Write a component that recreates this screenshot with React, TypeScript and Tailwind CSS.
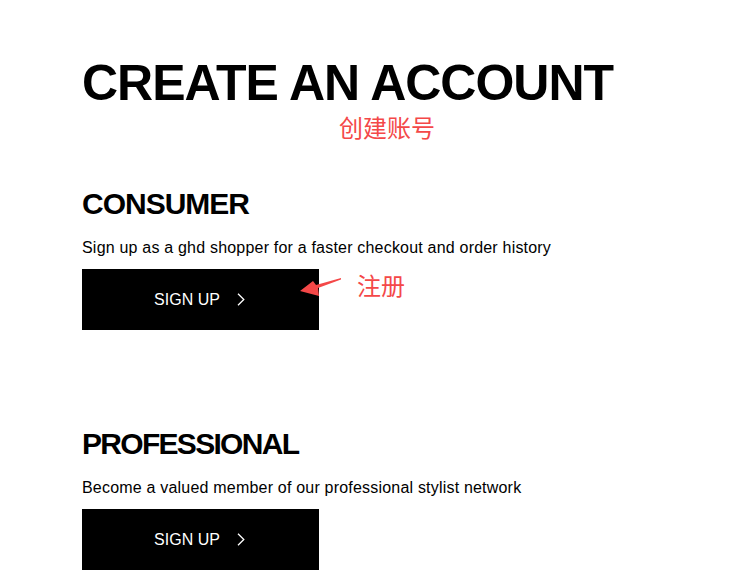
import React from "react";

const Chevron = () => (
  <svg width="8" height="13" viewBox="0 0 8 13" fill="none" className="shrink-0">
    <polyline points="1,0.8 6.8,6.5 1,12.2" stroke="white" strokeWidth="1.3" />
  </svg>
);

const SignUpButton = () => (
  <button className="w-[237px] h-[61px] bg-black text-white flex items-center justify-center gap-[17px] text-[16px] leading-none pr-[2px]">
    <span>SIGN UP</span>
    <Chevron />
  </button>
);

type SectionProps = {
  title: string;
  text: string;
  note?: boolean;
  className?: string;
  titleClass?: string;
};

const Section = ({ title, text, note, className, titleClass }: SectionProps) => (
  <section className={className}>
    <h2 className={`text-[30px] leading-none font-bold ${titleClass ?? "tracking-[-1px]"}`}>
      {title}
    </h2>
    <p className="mt-[17px] text-[16px] leading-[24px] tracking-[0.2px]">{text}</p>
    <div className="relative mt-[9px]">
      <SignUpButton />
      {note && (
        <>
          <svg
            className="absolute left-[217px] top-[8px]"
            width="46"
            height="22"
            viewBox="0 0 46 22"
          >
            <polygon
              points="1,14 14,4 17,8 42,1 42,2.5 19,11 20,19"
              fill="#f44848"
            />
          </svg>
          <span
            className="absolute left-[275px] top-[4px] text-[24px] leading-[24px] text-[#f44848]"
            style={{ fontFamily: '"Noto Sans CJK SC", sans-serif' }}
          >
            注册
          </span>
        </>
      )}
    </div>
  </section>
);

export default function App() {
  return (
    <div
      className="w-[736px] h-[575px] overflow-hidden bg-white text-black pl-[82px] pt-[58px]"
      style={{ fontFamily: '"Liberation Sans", Arial, sans-serif' }}
    >
      <h1 className="text-[50px] leading-none font-bold tracking-[-1px]">
        CREATE AN ACCOUNT
      </h1>
      <div
        className="ml-[257px] mt-[7px] text-[24px] leading-[24px] text-[#f44848]"
        style={{ fontFamily: '"Noto Sans CJK SC", sans-serif' }}
      >
        创建账号
      </div>
      <Section
        className="mt-[50px]"
        title="CONSUMER"
        text="Sign up as a ghd shopper for a faster checkout and order history"
        note
      />
      <Section
        className="mt-[99px]"
        title="PROFESSIONAL"
        titleClass="tracking-[-1.7px]"
        text="Become a valued member of our professional stylist network"
      />
    </div>
  );
}
